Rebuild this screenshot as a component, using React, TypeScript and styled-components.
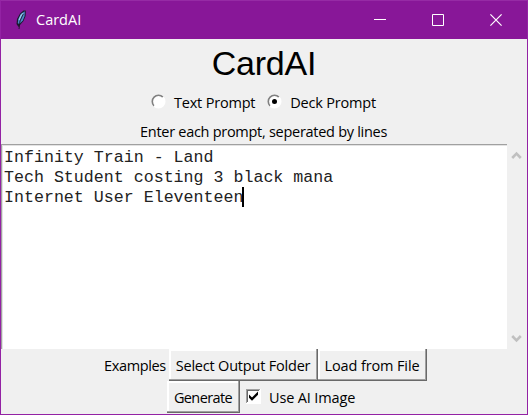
import React from "react";
import styled, { createGlobalStyle } from "styled-components";

const Global = createGlobalStyle`
  body { margin: 0; background: #f0f0f0; overflow: hidden; }
  * { box-sizing: border-box; }
`;

const Window = styled.main`
  width: 528px;
  height: 415px;
  display: flex;
  flex-direction: column;
  background: #f0f0f0;
  border: 1px solid #9322a4;
  border-top-color: #962ba5;
  color: #000;
  font-family: "Open Sans", "Noto Sans", sans-serif;
`;

const TitleBar = styled.header`
  height: 38px;
  flex: none;
  display: flex;
  align-items: center;
  background: #881798;
  color: #fff;
`;

const FeatherIcon = styled.svg`
  width: 16px;
  height: 22px;
  margin-left: 12px;
`;

const Caption = styled.span<{ $spacing?: number }>`
  font-size: 14.5px;
  letter-spacing: ${(p) => p.$spacing ?? -0.2}px;
  line-height: 20px;
  padding-top: 1px;
  white-space: pre;
`;

const AppName = styled(Caption)`
  margin-left: 7px;
  padding: 0 0 1px;
  flex: 1;
`;

const WindowButtons = styled.div`
  display: grid;
  grid-template-columns: repeat(3, 58px);
  margin-right: 2px;
`;

const WindowButton = styled.button`
  height: 38px;
  padding: 0;
  border: 0;
  background: none;
  display: flex;
  align-items: center;
  justify-content: center;
`;

const Heading = styled.h1`
  margin: 0;
  height: 49px;
  text-align: center;
  font: 400 34px/49px "Liberation Sans", Arial, sans-serif;
  letter-spacing: -0.2px;
`;

const Modes = styled.div`
  height: 28px;
  display: flex;
  align-items: center;
  padding: 1px 0 0 150px;
`;

const Choice = styled.label<{ $gap: number; $left?: number }>`
  display: flex;
  align-items: center;
  gap: ${(p) => p.$gap}px;
  margin-left: ${(p) => p.$left ?? 0}px;

  svg {
    margin-bottom: 2px;
  }
`;

const Hint = styled.div`
  height: 28px;
  display: flex;
  align-items: center;
  padding: 2px 0 0 139px;
`;

const Editor = styled.section`
  height: 205px;
  flex: none;
  display: flex;
`;

const TextBox = styled.div`
  width: 506px;
  padding: 2px 0 0 2px;
  background: #fff;
  border-top: 1px solid #a0a0a0;
  border-left: 1px solid #a0a0a0;
  box-shadow: inset 1px 1px #e3e3e3;
  font: 16.64px/20px "Liberation Mono", "Courier New", monospace;
  color: #222;
`;

const Line = styled.div`
  height: 20px;
  display: flex;
  white-space: pre;

  span {
    padding-top: 1px;
  }
`;

const Caret = styled.i`
  width: 2px;
  height: 20px;
  margin-left: -1px;
  background: #000;
`;

const ScrollBar = styled.div`
  width: 20px;
  padding: 7px 3px 5px 4px;
  display: flex;
  flex-direction: column;
  justify-content: space-between;
  background: #f0f0f0;
`;

const Actions = styled.div<{ $left: number }>`
  height: 32px;
  display: flex;
  align-items: center;
  padding-left: ${(p) => p.$left}px;
`;

const Button = styled.button<{ $width: number }>`
  width: ${(p) => p.$width}px;
  height: 32px;
  padding: 0 1px 0 0;
  flex: none;
  display: flex;
  align-items: center;
  justify-content: center;
  background: #f0f0f0;
  color: #000;
  font-family: inherit;
  border: 0;
  box-shadow: inset -1px -1px #696969, inset -2px -2px #a0a0a0, inset 2px 2px #fff;
`;

const ExamplesLabel = styled(Caption)`
  width: 65px;
  margin-left: 1px;
  flex: none;
`;

const Radio = ({ checked = false }: { checked?: boolean }) => (
  <svg width="15" height="15" viewBox="0 0 15 15">
    <circle cx="7.5" cy="7.5" r="6.2" fill="#fff" />
    <path d="M3.1 11.9A6.2 6.2 0 0 1 11.9 3.1" fill="none" stroke="#808080" strokeWidth="1.6" />
    <path d="M11.9 3.1A6.2 6.2 0 0 1 3.1 11.9" fill="none" stroke="#fff" strokeWidth="1.6" />
    {checked && <circle cx="7.5" cy="7.5" r="2.5" fill="#000" />}
  </svg>
);

const Check = () => (
  <svg width="15" height="15" viewBox="0 0 15 15">
    <path fill="#fff" d="M0 0h15v15H0z" />
    <path fill="#a0a0a0" d="M0 0h14v1H1v13H0z" />
    <path fill="#696969" d="M1 1h12v1H2v11H1z" />
    <path d="M3 5.5v3.2L6 11.8L12 5.8V2.6L6 8.6Z" fill="#000" />
  </svg>
);

const ScrollArrow = ({ down = false }: { down?: boolean }) => (
  <svg width="11" height="10" viewBox="0 0 11 10">
    <path d={down ? "M1.2 2L5.5 6.3L9.8 2" : "M1.2 7L5.5 2.7L9.8 7"} fill="none" stroke="#c0c0c0" strokeWidth="2.6" />
  </svg>
);

export default function App() {
  return (
    <>
      <Global />
      <Window>
        <TitleBar>
          <FeatherIcon viewBox="0 0 16 22">
            <path d="M5.5 18L3.5 15L4 10L7 4.5L10.5 1.5L12.8 1.5L12.6 7L10.5 12L7 16Z" fill="#1b1a2e" />
            <path d="M4.8 14.2L5.3 10L7.8 5L11.8 2.3L11.6 7L9.8 11.5L6.5 15Z" fill="#4a89ca" />
            <path d="M6.2 11L8 6.5L10 4.5" fill="none" stroke="#9bcbe8" strokeWidth="1.3" />
            <path d="M10.3 5L7 12L6 20" fill="none" stroke="#18152a" strokeWidth=".9" />
          </FeatherIcon>
          <AppName $spacing={0}>CardAI</AppName>
          <WindowButtons>
            <WindowButton aria-label="Minimize">
              <svg width="12" height="12"><path d="M0 5.5h12" stroke="#fff" /></svg>
            </WindowButton>
            <WindowButton aria-label="Maximize">
              <svg width="12" height="12"><path d="M.5.5h11v11H.5z" fill="none" stroke="#fff" /></svg>
            </WindowButton>
            <WindowButton aria-label="Close">
              <svg width="12" height="12"><path d="M.4.4l11.2 11.2M11.6.4L.4 11.6" stroke="#fff" strokeWidth="1.2" /></svg>
            </WindowButton>
          </WindowButtons>
        </TitleBar>
        <Heading>CardAI</Heading>
        <Modes>
          <Choice $gap={8}><Radio /><Caption>Text Prompt</Caption></Choice>
          <Choice $gap={8} $left={12}><Radio checked /><Caption>Deck Prompt</Caption></Choice>
        </Modes>
        <Hint><Caption $spacing={-0.28}>Enter each prompt, seperated by lines</Caption></Hint>
        <Editor>
          <TextBox>
            <Line><span>Infinity Train - Land</span></Line>
            <Line><span>Tech Student costing 3 black mana</span></Line>
            <Line><span>Internet User Eleventeen</span><Caret /></Line>
          </TextBox>
          <ScrollBar><ScrollArrow /><ScrollArrow down /></ScrollBar>
        </Editor>
        <Actions $left={102}>
          <ExamplesLabel $spacing={-0.35}>Examples</ExamplesLabel>
          <Button $width={149}><Caption>Select Output Folder</Caption></Button>
          <Button $width={109}><Caption $spacing={-0.12}>Load from File</Caption></Button>
        </Actions>
        <Actions $left={166}>
          <Button $width={73}><Caption $spacing={-0.6}>Generate</Caption></Button>
          <Choice $gap={8} $left={6}><Check /><Caption $spacing={-0.15}>Use AI Image</Caption></Choice>
        </Actions>
      </Window>
    </>
  );
}
